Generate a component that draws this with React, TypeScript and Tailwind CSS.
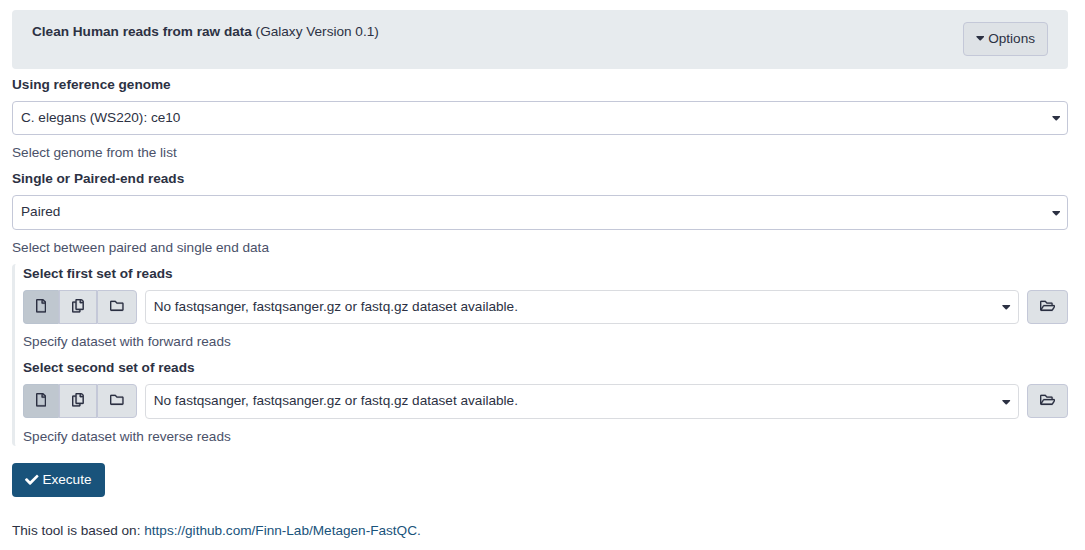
import type { ReactNode } from "react";
import {
  FaCaretDown,
  FaCheck,
  FaRegCopy,
  FaRegFile,
  FaRegFolder,
  FaRegFolderOpen,
} from "react-icons/fa";

function Select({ value, muted = false }: { value: string; muted?: boolean }) {
  return (
    <div
      className={`flex h-[34.4px] min-w-0 flex-1 items-center justify-between rounded-[4px] border bg-white pr-[7px] pl-2 ${
        muted ? "border-[#dadce0]" : "border-[#c4c8d8]"
      }`}
    >
      <span>{value}</span>
      <FaCaretDown className="h-[13.6px] w-[8.5px]" />
    </div>
  );
}

function Field({ label, help, children }: { label: string; help: string; children: ReactNode }) {
  return (
    <div className="pb-[5.7px]">
      <div className="mb-[5.6px] font-bold">{label}</div>
      <div className="flex gap-2">{children}</div>
      <div className="mt-2 text-[#4a5169]">{help}</div>
    </div>
  );
}

function DatasetPicker() {
  return (
    <>
      <div className="flex h-[34px]">
        <button className="flex items-center rounded-l-[4px] border border-[#bac3cf] border-r-[#c0c6d2] bg-[#bfc7cf] px-3 pb-[2px]">
          <FaRegFile className="h-[13.6px] w-[10.2px] stroke-current stroke-[12]" />
        </button>
        <button className="flex items-center border border-[#c4c8d8] bg-[#dee2e6] px-3 pb-[2px]">
          <FaRegCopy className="h-[13.6px] w-[11.9px] stroke-current stroke-[12]" />
        </button>
        <button className="flex items-center rounded-r-[4px] border border-[#c4c8d8] bg-[#dee2e6] px-3 pb-[2px]">
          <FaRegFolder className="h-[13.6px] w-[13.6px] stroke-current stroke-[8]" />
        </button>
      </div>
      <Select value="No fastqsanger, fastqsanger.gz or fastq.gz dataset available." muted />
      <button className="flex h-[34px] items-center rounded-[4px] border border-[#c4c8d8] bg-[#dee2e6] px-3 pb-[2px]">
        <FaRegFolderOpen className="h-[13.6px] w-[15.3px] stroke-current stroke-[8]" />
      </button>
    </>
  );
}

export default function App() {
  return (
    <main className="h-[550px] w-[1085px] overflow-hidden bg-white pt-[10.2px] pr-[17px] pl-3 font-['Liberation_Sans',Arial,sans-serif] text-[13.6px] leading-[20.4px] text-[#2c3143]">
      <header className="flex h-[58.4px] items-start justify-between rounded-[4px] bg-[#e7ebee] px-5 pt-3">
        <div>
          <b>Clean Human reads from raw data</b> (Galaxy Version 0.1)
        </div>
        <button className="flex h-[34px] items-center gap-[3.8px] rounded-[4px] border border-[#c4c8d8] bg-[#dee2e6] px-3">
          <FaCaretDown className="mb-[2px] h-[13.6px] w-[8.5px]" />
          Options
        </button>
      </header>

      <div className="pt-[6.2px]">
        <Field label="Using reference genome" help="Select genome from the list">
          <Select value="C. elegans (WS220): ce10" />
        </Field>
        <Field label="Single or Paired-end reads" help="Select between paired and single end data">
          <Select value="Paired" />
        </Field>
        <section className="h-[182.4px] rounded-[4px] border-l-[3px] border-[#e7ebee] pl-2">
          <Field label="Select first set of reads" help="Specify dataset with forward reads">
            <DatasetPicker />
          </Field>
          <Field label="Select second set of reads" help="Specify dataset with reverse reads">
            <DatasetPicker />
          </Field>
        </section>
      </div>

      <button className="mt-[17px] flex h-[34px] items-center gap-[3.8px] rounded-[4px] bg-[#19537b] px-[13px] pt-px text-white">
        <FaCheck className="mb-[2px] size-[13.6px]" />
        Execute
      </button>

      <p className="mt-[23.8px]">
        This tool is based on:{" "}
        <a className="text-[#19537b]" href="https://github.com/Finn-Lab/Metagen-FastQC">
          https://github.com/Finn-Lab/Metagen-FastQC.
        </a>
      </p>
    </main>
  );
}
